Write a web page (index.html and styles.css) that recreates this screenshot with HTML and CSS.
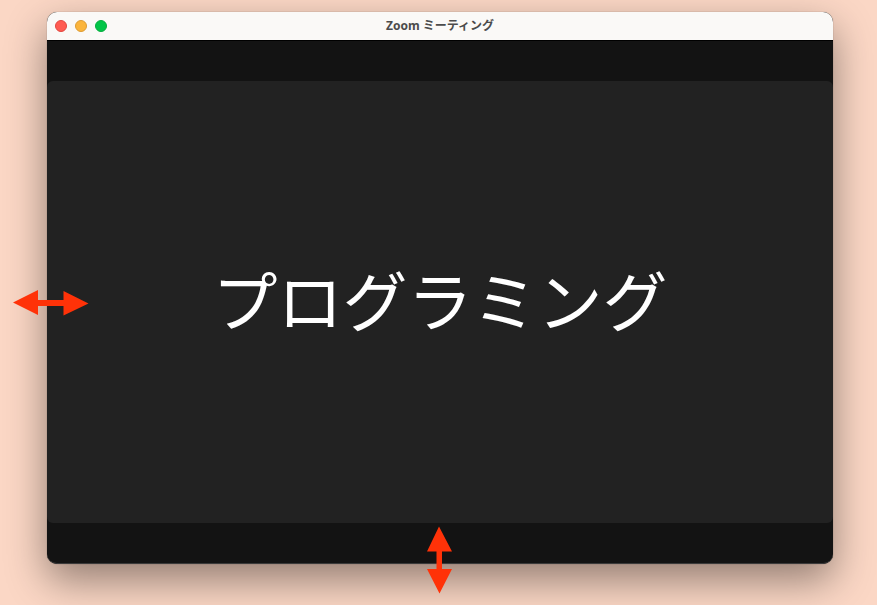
FILE: index.html
```html
<!DOCTYPE html>
<html lang="ja">
<head>
<meta charset="utf-8">
<title>Zoom ミーティング</title>
<link rel="stylesheet" href="styles.css">
</head>
<body>
<main class="window">
  <header class="titlebar">
    <div class="controls">
      <button class="control close" type="button" aria-label="閉じる"></button>
      <button class="control minimize" type="button" aria-label="最小化"></button>
      <button class="control expand" type="button" aria-label="拡大"></button>
    </div>
    <h1 class="title">Zoom ミーティング</h1>
  </header>
  <section class="meeting">
    <div class="participant">プログラミング</div>
  </section>
  <svg class="arrow arrow-horizontal" width="76" height="28" viewBox="0 0 76 28" aria-hidden="true">
    <path d="M0 13.500 25 1V11H50.500V2L75.500 14.500 50.500 26.500V17H25V26Z"/>
  </svg>
  <svg class="arrow arrow-vertical" width="26" height="68" viewBox="0 0 26 68" aria-hidden="true">
    <path d="M12 0.500 25 25.500H15V43H25L12.500 67.500 0 43H9.500V25.500H0Z"/>
  </svg>
</main>
</body>
</html>
```
FILE: styles.css
```css
* { box-sizing: border-box; }

body {
  margin: 0;
  min-height: 100vh;
  padding: 12px 44px 41px 47px;
  display: flex;
  overflow: hidden;
  background: #fbd7c5;
  font-family: "Noto Sans", "Noto Sans CJK JP", sans-serif;
}

.window {
  position: relative;
  flex: 1;
  display: flex;
  flex-direction: column;
  border-radius: 10px;
  background: #131313;
  box-shadow: 0 0 1px rgba(0, 0, 0, 0.5), 0 16px 40px rgba(0, 0, 0, 0.42);
}

.titlebar {
  height: 29px;
  display: grid;
  grid-template-columns: 1fr auto 1fr;
  align-items: center;
  padding: 0 8px;
  background: #faf9f7;
  border-bottom: 1px solid #000;
  border-radius: 10px 10px 0 0;
}

.controls {
  display: flex;
  gap: 8px;
}

.control {
  width: 12px;
  height: 12px;
  padding: 0;
  border: 1px solid;
  border-radius: 50%;
}

.close { background: #ff5b51; border-color: #e2473f; }
.minimize { background: #fbb53c; border-color: #dd9c33; }
.expand { background: #02c548; border-color: #05ad3e; }

.title {
  margin: 0;
  color: #4b4b4b;
  font-size: 12px;
  line-height: 20px;
  font-weight: 700;
}

.meeting {
  flex: 1;
  display: flex;
  padding: 40px 0;
  border: solid #3a3a3a;
  border-width: 0 0 1px;
  border-radius: 0 0 10px 10px;
}

.participant {
  flex: 1;
  display: flex;
  align-items: center;
  justify-content: center;
  padding-bottom: 8px;
  border-radius: 6px;
  background: #222;
  color: #fff;
  font-family: "Noto Sans CJK JP", sans-serif;
  font-size: 65px;
  line-height: 96px;
}

.arrow {
  position: absolute;
  fill: #ff3208;
}

.arrow-horizontal {
  left: -34px;
  top: 277px;
}

.arrow-vertical {
  left: 380px;
  bottom: -30px;
}
```
